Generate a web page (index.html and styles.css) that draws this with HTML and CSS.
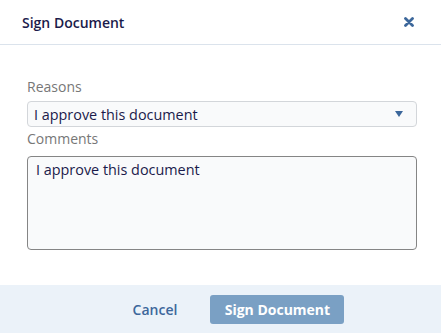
FILE: index.html
```html
<!DOCTYPE html>
<html>
<head>
  <title>Sign Document</title>
  <link rel="stylesheet" href="styles.css">
</head>
<body>
  <div class="modal">
    <div class="modal-header">
      <h1>Sign Document</h1>
      <button class="close-btn" title="Close">
        <svg width="10" height="10" viewBox="0 0 10 10"><path d="M1.5 1.5 L8.5 8.5 M8.5 1.5 L1.5 8.5" stroke="#3c679b" stroke-width="2.8" stroke-linecap="round"/></svg>
      </button>
    </div>

    <div class="modal-body">
      <label class="field-label">Reasons</label>
      <div class="select-box">
        <span>I approve this document</span>
        <span class="caret"></span>
      </div>
      <label class="field-label">Comments</label>
      <textarea class="comments">I approve this document</textarea>
    </div>

    <div class="modal-footer">
      <button class="btn-link">Cancel</button>
      <button class="btn-primary">Sign Document</button>
    </div>
  </div>
</body>
</html>
```

FILE: styles.css
```css
/* Sign document dialog */
body {
  margin: 0;
  font-family: "Open Sans", "Liberation Sans", sans-serif;
  background: #fff;
}
.modal {
  width: 441px;
  height: 333px;
  display: flex;
  flex-direction: column;
}
.modal-header {
  height: 45px;
  border-bottom: 1px solid #dbe3ec;
  display: flex;
  align-items: center;
  justify-content: space-between;
  padding: 0 22px;
  box-sizing: border-box;
}
.modal-header h1 {
  margin: 0;
  font-size: 14px;
  font-weight: 600;
  color: #1b1b4b;
}
.close-btn {
  border: none;
  background: none;
  padding: 0;
  margin-right: 5px;
  display: flex;
  cursor: pointer;
}
.modal-body {
  flex: 1;
  padding: 32px 24px 0 27px;
  display: flex;
  flex-direction: column;
}
.field-label {
  font-size: 14px;
  color: #777;
  line-height: 19px;
}
.select-box {
  margin-top: 5px;
  height: 26px;
  border: 1px solid #d3d6da;
  border-radius: 4px;
  background: #f9fafb;
  display: flex;
  align-items: center;
  justify-content: space-between;
  padding: 0 13px 0 6px;
  box-sizing: border-box;
  font-size: 14.4px;
  color: #1b1b4b;
  margin-bottom: 2px;
}
.caret {
  width: 0;
  height: 0;
  border-left: 4px solid transparent;
  border-right: 4px solid transparent;
  border-top: 6px solid #3c679b;
}
.comments {
  margin-top: 8px;
  height: 94px;
  border: 1px solid #858585;
  border-radius: 4px;
  background: #f9fafb;
  font-family: inherit;
  font-size: 14.4px;
  color: #1b1b4b;
  padding: 3px 8px;
  box-sizing: border-box;
  resize: none;
}
.modal-footer {
  height: 48px;
  background: #ebf2f9;
  display: flex;
  align-items: center;
  justify-content: center;
  gap: 33px;
  padding-left: 36px;
}
.btn-link {
  border: none;
  background: none;
  font-family: inherit;
  font-size: 14px;
  font-weight: 600;
  color: #3c679b;
  padding: 0;
}
.btn-primary {
  border: none;
  background: #7aa0c4;
  color: #fff;
  font-family: inherit;
  font-size: 14px;
  font-weight: 700;
  width: 134px;
  height: 29px;
  border-radius: 3px;
}
```
